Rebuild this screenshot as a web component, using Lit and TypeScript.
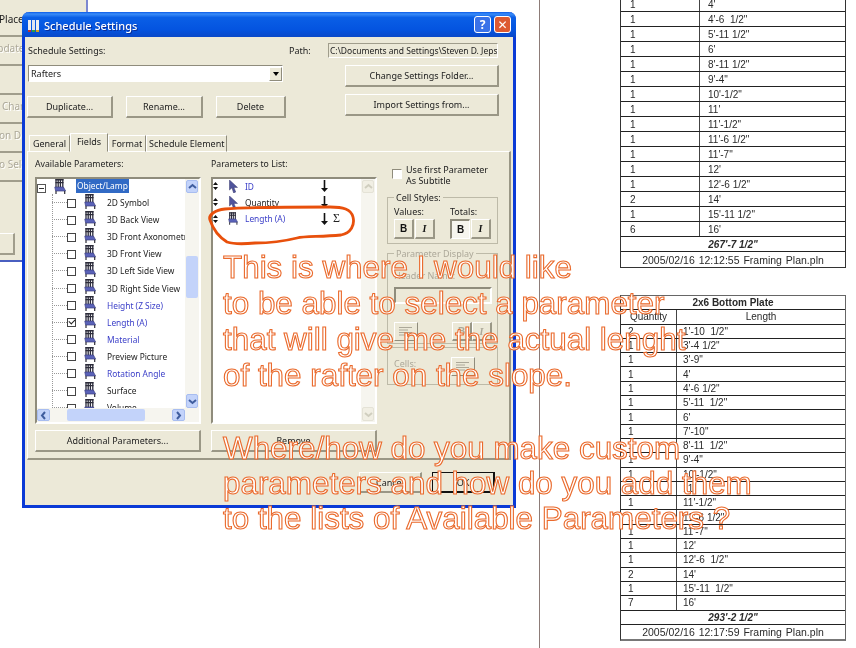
import { LitElement, html, css } from "lit";
import { customElement } from "lit/decorators.js";

const chair = () => html`<svg class="chair" viewBox="0 0 12 15" width="12" height="15">
  <path d="M1.5 0h8v1.4h-8zM1.5 3h8v1.2h-8z" fill="#2e2e38"/>
  <path d="M2 0v9M4.2 0v9M6.4 0v9M8.8 0v9" stroke="#2c2c3c" stroke-width="1.3" fill="none"/>
  <path d="M.8 8h8.6l2.2 4H1.6z" fill="#5a62b8" stroke="#3c3f80" stroke-width=".7"/>
  <path d="M2 12v3M10.7 12v3" stroke="#2e2e38" stroke-width="1.2"/>
</svg>`;
const cursor = () => html`<svg class="cursor" viewBox="0 0 9 13" width="9" height="13">
  <path d="M1 0v10l2.4-2.2L5.2 13l2-1-1.8-4.6H9z" fill="#50549c" stroke="#34366a" stroke-width=".5"/>
</svg>`;
const updown = () => html`<svg class="updown" viewBox="0 0 5 8" width="5" height="8"><path d="M2.5 0L5 3H0zM0 5h5L2.5 8z" fill="#111"/></svg>`;
const down = () => html`<svg class="down" viewBox="0 0 7 12" width="7" height="12"><path d="M2.7 0h1.6v8H7l-3.5 4L0 8h2.7z" fill="#111"/></svg>`;
const chev = (d: string, c = "#3f5d9e") => html`<svg viewBox="0 0 9 9" width="9" height="9"><path d="${d}" fill="none" stroke="${c}" stroke-width="2"/></svg>`;
const alignIcon = () => html`<svg viewBox="0 0 14 9" width="14" height="9"><path d="M0 .5h13M0 3h9M0 5.5h13M0 8h9" stroke="#aca899" stroke-width="1"/></svg>`;

const tree: [string, boolean, boolean][] = [
  ["2D Symbol", false, false],
  ["3D Back View", false, false],
  ["3D Front Axonometric", false, false],
  ["3D Front View", false, false],
  ["3D Left Side View", false, false],
  ["3D Right Side View", false, false],
  ["Height (Z Size)", true, false],
  ["Length (A)", true, true],
  ["Material", true, false],
  ["Preview Picture", false, false],
  ["Rotation Angle", true, false],
  ["Surface", false, false],
  ["Volume", false, false],
];

const rows1 = [
  ["1", "4'"], ["1", "4'-6  1/2\""], ["1", "5'-11 1/2\""], ["1", "6'"], ["1", "8'-11 1/2\""], ["1", "9'-4\""],
  ["1", "10'-1/2\""], ["1", "11'"], ["1", "11'-1/2\""], ["1", "11'-6 1/2\""], ["1", "11'-7\""], ["1", "12'"],
  ["1", "12'-6 1/2\""], ["2", "14'"], ["1", "15'-11 1/2\""], ["6", "16'"],
];
const rows2 = [
  ["2", "1'-10  1/2\""], ["1", "3'-4 1/2\""], ["1", "3'-9\""], ["1", "4'"], ["1", "4'-6 1/2\""], ["1", "5'-11  1/2\""],
  ["1", "6'"], ["1", "7'-10\""], ["1", "8'-11  1/2\""], ["1", "9'-4\""], ["1", "10'-1/2\""], ["1", "11'"],
  ["1", "11'-1/2\""], ["1", "11'-6 1/2\""], ["1", "11'-7\""], ["1", "12'"], ["1", "12'-6  1/2\""], ["2", "14'"],
  ["1", "15'-11  1/2\""], ["7", "16'"],
];

@customElement("app-root")
export class AppRoot extends LitElement {
  static styles = css`
    :host { display: block; position: relative; width: 856px; height: 648px; overflow: hidden; background: #fff;
      font-family: "Noto Sans", "DejaVu Sans", sans-serif; font-size: 9px; color: #222; filter: blur(.35px); }
    * { box-sizing: border-box; }
    svg { display: block; flex: none; }
    .divider { position: absolute; left: 539px; top: 0; width: 1px; height: 648px; background: #8d7c78; }

    /* window behind */
    .back { position: absolute; left: 0; top: 0; width: 88px; height: 262px; background: #ece9d8;
      border-right: 2px solid #7d88d0; border-bottom: 2px solid #4a5fc0; overflow: hidden; padding-top: 8px;
      display: flex; flex-direction: column; font-size: 10px; }
    .bk { width: 78px; height: 29px; border-bottom: 2px solid #a09d8c; flex: none; line-height: 22px; white-space: nowrap; overflow: hidden; color: #222; }
    .bk.dis { color: #aca899; text-shadow: 1px 1px 0 #fff; }
    .bk .m1 { margin-left: -1px; } .bk .m2 { margin-left: -10px; } .bk .m3 { margin-left: 2px; }
    .bk.last { width: 15px; height: 22px; margin-top: 51px; border-top: 1px solid #fff; border-right: 2px solid #a09d8c; }

    /* dialog */
    .dialog { position: absolute; left: 22px; top: 12px; width: 494px; height: 496px; background: #ece9d8;
      border: 3px solid #0a3ad6; border-top: 0; border-radius: 7px 7px 0 0; display: flex; flex-direction: column; }
    .title { height: 25px; margin: 0 -3px; border-radius: 7px 7px 0 0; flex: none; display: flex; align-items: center; padding: 2px 5px 0 5px;
      background: linear-gradient(#0a5ae8 0, #3a8cf8 8%, #0a5fe6 22%, #0454e0 70%, #0a48c8 100%); color: #fff; font-size: 11px; font-weight: 500; }
    .title .name { margin-left: 4px; flex: 1; white-space: nowrap; text-shadow: 1px 1px 0 #0a2f9a; }
    .tb { width: 17px; height: 17px; margin-top: -2px; border: 1px solid #fff; border-radius: 3px; display: flex; align-items: center; justify-content: center; color: #fff; font-size: 12px; font-weight: 700; line-height: 1; }
    .tb.help { background: #3a72e8; margin-right: 3px; }
    .tb.close { background: #dd5a32; }
    .body { flex: 1; display: flex; flex-direction: column; min-height: 0; }

    .top { height: 96px; display: grid; grid-template-columns: 264px 1fr; flex: none; }
    .tl { padding-left: 3px; display: flex; flex-direction: column; align-items: flex-start; }
    .tl .lab { margin-top: 7px; line-height: 13px; }
    .combo { width: 255px; height: 17px; margin-top: 8px; background: #fff; border: 1px solid; border-color: #8f8c7c #fff #fff #8f8c7c;
      display: flex; align-items: center; padding-left: 2px; }
    .combo span { flex: 1; }
    .cbtn { width: 13px; height: 14px; background: #ece9d8; border: 1px solid; border-color: #fff #8f8c7c #8f8c7c #fff; display: flex; align-items: center; justify-content: center; }
    .cbtn i { width: 0; height: 0; border: 3.5px solid transparent; border-top: 4px solid #000; border-bottom: 0; }
    .brow { display: flex; gap: 13px; margin-top: 14px; margin-left: -1px; }
    .btn { height: 22px; background: #ece9d8; border: 1px solid; border-color: #fff #9a9786 #9a9786 #fff; border-width: 1px 2px 2px 1px;
      display: flex; align-items: center; justify-content: center; white-space: nowrap; flex: none; }
    .w86 { width: 86px; } .w77 { width: 77px; } .w70 { width: 70px; } .w154 { width: 154px; } .w166 { width: 166px; } .w63 { width: 63px; }
    .tr { display: flex; flex-direction: column; align-items: flex-start; }
    .pathrow { display: flex; align-items: center; margin-top: 6px; }
    .pathrow .pl { width: 39px; }
    .pathf { width: 170px; height: 15px; border: 1px solid; border-color: #a09d8c #fff #fff #a09d8c; padding-left: 1px; line-height: 13px; overflow: hidden; white-space: nowrap; font-size: 8.5px; }
    .tr .btn { margin-left: 56px; margin-top: 7px; }

    .tabs { height: 19px; display: flex; align-items: flex-end; padding-left: 4px; flex: none; position: relative; z-index: 1; margin-bottom: -1px; }
    .tab { height: 17px; border: 1px solid; border-color: #fff #8f8c7c transparent #fff; padding: 0 2px; line-height: 15px; white-space: nowrap; text-align: center; flex: none; }
    .tab.on { height: 19px; background: #ece9d8; border-bottom-color: #ece9d8; line-height: 15px; }
    .t41 { width: 41px; } .t37 { width: 38px; } .t38 { width: 38px; } .t81 { width: 81px; }
    .panel { margin-left: 2px; width: 484px; height: 309px; flex: none; border: 1px solid; border-color: #fff #9a9786 #9a9786 #fff; border-width: 1px 2px 2px 1px;
      display: grid; grid-template-columns: 166px 166px 111px; column-gap: 10px; padding-left: 7px; }
    .col { display: flex; flex-direction: column; align-items: flex-start; }
    .col .h { margin-top: 6px; line-height: 13px; height: 19px; font-size: 8.7px; }
    .list { width: 166px; height: 247px; background: #fff; border: 2px solid; border-color: #8f8c7c #fff #fff #8f8c7c; position: relative; overflow: hidden; font-size: 8.4px; }
    .col > .btn { margin-top: 6px; }

    .tree { width: 149px; height: 231px; overflow: hidden; position: relative; }
    .tree::before { content: ""; position: absolute; left: 15px; top: 15px; bottom: 0; border-left: 1px dotted #999; }
    .root { height: 15px; display: flex; align-items: flex-start; }
    .minus { width: 9px; height: 9px; border: 1px solid #555; margin-top: 5px; position: relative; flex: none; }
    .minus::after { content: ""; position: absolute; left: 1px; right: 1px; top: 3px; height: 1px; background: #333; }
    .root .chair { margin-left: 8px; }
    .sel { margin-left: 10px; background: #316ac5; color: #fff; padding: 0 1px; line-height: 14px; height: 14px; }
    .item { height: 17.1px; display: flex; align-items: center; white-space: nowrap; position: relative; }
    .item::before { content: ""; width: 15px; margin-left: 15px; border-top: 1px dotted #999; flex: none; }
    .chk { width: 9px; height: 9px; border: 1px solid #444; background: #fff; flex: none; position: relative; margin-top: 1px; }
    .chk.on::after { content: ""; position: absolute; left: 1px; top: 0; width: 5px; height: 3px; border-left: 1.3px solid #222; border-bottom: 1.3px solid #222; transform: rotate(-45deg); }
    .item .chair { margin-left: 8px; margin-top: -3px; }
    .item span { margin-left: 11px; }
    .blue { color: #3a3ec8; }

    .vbar { position: absolute; right: 0; top: 0; bottom: 0; width: 14px; background: #f6f5ef; display: flex; flex-direction: column; padding: 1px 1px 14px 1px; }
    .sb { background: #c3d3fa; border: 1px solid #a8bdf0; border-radius: 2px; display: flex; align-items: center; justify-content: center; flex: none; }
    .vbar .sb.u { height: 13px; }
    .vbar .thumb { height: 42px; margin-top: 63px; background: #c3d3fa; border-radius: 2px; flex: none; }
    .vbar .sb.d { height: 14px; margin-top: auto; }
    .hbar { position: absolute; left: 0; right: 0; bottom: 0; height: 14px; background: #f6f5ef; display: flex; align-items: center; padding-right: 14px; }
    .hbar .sb { width: 13px; height: 12px; }
    .hbar .hthumb { width: 78px; height: 12px; margin-left: 17px; background: #c3d3fa; border-radius: 2px; }
    .hbar .r { margin-left: auto; }
    .vbar.off { padding-bottom: 1px; } .vbar.off .sb { background: #f1efe4; border-color: #e4e2d6; }

    .prow { height: 16.3px; display: flex; align-items: center; white-space: nowrap; }
    .prow:first-child { margin-top: -1px; }
    .prow .cursor, .prow .chair { margin-left: 10px; width: 10px; }
    .prow span.t { width: 76px; margin-left: 7px; flex: none; }
    .prow .sig { margin-left: 5px; font-family: "Liberation Serif", serif; font-size: 12px; }

    .r-col { padding-left: 5px; padding-top: 12px; }
    .usefirst { display: flex; gap: 4px; line-height: 11px; }
    .usefirst .bigchk { width: 10px; height: 10px; margin-top: 5px; border: 1px solid; border-color: #8f8c7c #fff #fff #8f8c7c; background: #fff; flex: none; }
    .grp { width: 111px; margin-left: -5px; border: 1px solid #bdbaa8; position: relative; flex: none; }
    .grp .lg { position: absolute; left: 6px; top: -7px; background: #ece9d8; padding: 0 2px; line-height: 13px; }
    .g1 { height: 47px; margin-top: 11px; padding: 7px 0 0 6px; }
    .cells { display: grid; grid-template-columns: 56px 56px; }
    .cells .cl { line-height: 13px; height: 14px; }
    .bi { display: flex; }
    .sq { width: 20px; height: 20px; margin-right: 1px; background: #ece9d8; border: 1px solid; border-color: #fff #9a9786 #9a9786 #fff; border-width: 1px 2px 2px 1px;
      display: flex; align-items: center; justify-content: center; font-family: "Liberation Sans", sans-serif; font-weight: 700; font-size: 10px; color: #111; }
    .sq.it { font-style: italic; font-family: "Liberation Serif", serif; }
    .sq.pr { background: #f6f5ee; border-color: #8f8c7c #fff #fff #8f8c7c; border-width: 2px 1px 1px 2px; }
    .g2 { height: 91px; margin-top: 9px; padding: 15px 0 0 6px; color: #aca899; }
    .g2 .hn { line-height: 13px; height: 18px; }
    .g2 .fld { width: 98px; height: 17px; border: 2px solid; border-color: #8f8c7c #fff #fff #8f8c7c; }
    .g2 .ctl { display: flex; justify-content: space-between; margin-top: 18px; width: 98px; }
    .dsq { width: 24px; height: 19px; border: 1px solid; border-color: #fff #8f8c7c #8f8c7c #fff; display: flex; align-items: center; justify-content: center; }
    .g2 .bi .sq { color: #aca899; height: 19px; margin-right: 0; }
    .g3 { height: 38px; margin-top: 3px; padding: 9px 22px 0 6px; color: #aca899; display: flex; justify-content: space-between; }

    .foot { flex: 1; display: flex; justify-content: flex-end; align-items: flex-start; gap: 10px; padding: 12px 18px 0 0; }
    .foot .btn { height: 21px; }
    .foot .ok { border: 1px solid #111; border-width: 1px 2px 2px 1px; }

    /* sheets */
    .sheet { position: absolute; left: 620px; width: 226px; background: #fff; border: solid #333; border-width: 0 1px 1px 1px; font-family: "Liberation Sans", Arial, sans-serif; font-size: 10px; color: #2a2a2a; }
    .s1 { top: -3px; } .s2 { top: 295px; border-top: 1px solid #666; border-right-color: #666; border-bottom: 2px solid #777; }
    .rw { display: grid; height: 15px; border-bottom: 1px solid #222; align-items: center; }
    .s1 .rw { grid-template-columns: 79px 1fr; }
    .s2 .rw { height: 14.3px; grid-template-columns: 56px 1fr; }
    .rw > div { line-height: 13px; white-space: pre; height: 100%; display: flex; align-items: center; }
    .rw > .q { border-right: 1px solid #444; }
    .s1 .q { padding-left: 9px; } .s1 .v { padding-left: 8px; }
    .s2 .q { padding-left: 7px; } .s2 .v { padding-left: 6px; }
    .rw.full { display: flex; justify-content: center; }
    .rw.full.ttl { font-weight: 700; }
    .rw.full.tot { font-weight: 700; font-style: italic; }
    .rw.last { border-bottom: 0; font-size: 10.5px; word-spacing: 1px; }
    .s2 .rw .hc { justify-content: center; padding: 0; }

    /* annotations */
    .oval { position: absolute; left: 205px; top: 155px; width: 160px; height: 100px; overflow: visible; }
    .note { position: absolute; left: 223px; font-family: "Liberation Sans", Arial, sans-serif; font-size: 31.4px; line-height: 36px; white-space: nowrap;
      color: #fff; -webkit-text-stroke: 1.1px #ea6a2c; }
    .n1 { top: 250px; } .n2 { top: 431px; line-height: 35px; }
  `;

  private table(cls: string, rows: string[][], total: string, foot: string, head = false) {
    return html`<div class="sheet ${cls}">
      ${head ? html`<div class="rw full ttl">2x6 Bottom Plate</div>
        <div class="rw"><div class="q hc">Quantity</div><div class="v hc">Length</div></div>` : ""}
      ${rows.map(r => html`<div class="rw"><div class="q">${r[0]}</div><div class="v">${r[1]}</div></div>`)}
      <div class="rw full tot">${total}</div>
      <div class="rw full last">${foot}</div>
    </div>`;
  }

  render() {
    return html`
      <div class="divider"></div>
      <div class="back">
        <div class="bk"><span class="m1">Place</span></div>
        <div class="bk dis"><span class="m2">Update</span></div>
        <div class="bk dis"></div>
        <div class="bk dis"><span class="m3">Change</span></div>
        <div class="bk dis"><span class="m1">on Draw</span></div>
        <div class="bk dis"><span class="m1">o Select</span></div>
        <div class="bk last"></div>
      </div>
      ${this.table("s1", rows1, "267'-7 1/2\"", "2005/02/16 12:12:55   Framing Plan.pln")}
      ${this.table("s2", rows2, "293'-2 1/2\"", "2005/02/16 12:17:59   Framing Plan.pln", true)}

      <div class="dialog">
        <div class="title">
          <svg viewBox="0 0 13 13" width="13" height="13"><path d="M1 1h3v10H1z" fill="#eee"/><path d="M5 1h3v10H5z" fill="#dfe4f0"/><path d="M9 1h3v10H9z" fill="#eee"/><path d="M1 11h3v2H1z" fill="#c03030"/><path d="M5 11h3v2H5z" fill="#30a040"/><path d="M9 11h3v2H9z" fill="#d0a020"/></svg>
          <span class="name">Schedule Settings</span>
          <div class="tb help">?</div>
          <div class="tb close">✕</div>
        </div>
        <div class="body">
          <div class="top">
            <div class="tl">
              <div class="lab">Schedule Settings:</div>
              <div class="combo"><span>Rafters</span><div class="cbtn"><i></i></div></div>
              <div class="brow">
                <div class="btn w86">Duplicate...</div>
                <div class="btn w77">Rename...</div>
                <div class="btn w70">Delete</div>
              </div>
            </div>
            <div class="tr">
              <div class="pathrow"><div class="pl">Path:</div><div class="pathf">C:\\Documents and Settings\\Steven D. Jeps</div></div>
              <div class="btn w154">Change Settings Folder...</div>
              <div class="btn w154">Import Settings from...</div>
            </div>
          </div>
          <div class="tabs">
            <div class="tab t41">General</div>
            <div class="tab on t37">Fields</div>
            <div class="tab t38">Format</div>
            <div class="tab t81">Schedule Element</div>
          </div>
          <div class="panel">
            <div class="col">
              <div class="h">Available Parameters:</div>
              <div class="list">
                <div class="tree">
                  <div class="root"><div class="minus"></div>${chair()}<div class="sel">Object/Lamp</div></div>
                  ${tree.map(([n, b, c]) => html`<div class="item"><div class="chk ${c ? "on" : ""}"></div>${chair()}<span class="${b ? "blue" : ""}">${n}</span></div>`)}
                </div>
                <div class="vbar">
                  <div class="sb u">${chev("M1 6l3.5-3 3.5 3")}</div>
                  <div class="thumb"></div>
                  <div class="sb d">${chev("M1 3l3.5 3 3.5-3")}</div>
                </div>
                <div class="hbar">
                  <div class="sb l">${chev("M6 1L3 4.5 6 8")}</div>
                  <div class="hthumb"></div>
                  <div class="sb r">${chev("M3 1l3 3.5L3 8")}</div>
                </div>
              </div>
              <div class="btn w166">Additional Parameters...</div>
            </div>
            <div class="col">
              <div class="h">Parameters to List:</div>
              <div class="list">
                <div class="prow">${updown()}${cursor()}<span class="t blue">ID</span>${down()}</div>
                <div class="prow">${updown()}${cursor()}<span class="t">Quantity</span>${down()}</div>
                <div class="prow">${updown()}${chair()}<span class="t blue">Length (A)</span>${down()}<span class="sig">Σ</span></div>
                <div class="vbar off">
                  <div class="sb u">${chev("M1 6l3.5-3 3.5 3", "#d0cebf")}</div>
                  <div class="sb d">${chev("M1 3l3.5 3 3.5-3", "#d0cebf")}</div>
                </div>
              </div>
              <div class="btn w166">Remove</div>
            </div>
            <div class="col r-col">
              <div class="usefirst"><div class="bigchk"></div><div>Use first Parameter<br />As Subtitle</div></div>
              <div class="grp g1">
                <div class="lg">Cell Styles:</div>
                <div class="cells">
                  <div class="cl">Values:</div><div class="cl">Totals:</div>
                  <div class="bi"><div class="sq">B</div><div class="sq it">I</div></div>
                  <div class="bi"><div class="sq pr">B</div><div class="sq it">I</div></div>
                </div>
              </div>
              <div class="grp g2">
                <div class="lg">Parameter Display</div>
                <div class="hn">Header Name:</div>
                <div class="fld"></div>
                <div class="ctl">
                  <div class="dsq">${alignIcon()}</div>
                  <div class="bi"><div class="sq">B</div><div class="sq it">I</div></div>
                </div>
              </div>
              <div class="grp g3"><span>Cells:</span><div class="dsq">${alignIcon()}</div></div>
            </div>
          </div>
          <div class="foot">
            <div class="btn w63">Cancel</div>
            <div class="btn w63 ok">OK</div>
          </div>
        </div>
      </div>

      <svg class="oval" viewBox="0 0 160 100" fill="none">
        <path d="M5 65C3 60 10 55 20 54C40 52 85 52 125 52C138 52 146 54 148 62C150 70 146 78 136 80C115 82 100 81 92 83C80 86 65 88 50 88C40 89 28 89 22 87C14 82 8 74 5 65Z" stroke="#e8500c" stroke-width="2.8"/>
      </svg>
      <div class="note n1">This is where I would like<br />to be able to select a parameter<br />that will give me the actual lenght<br />of the rafter on the slope.</div>
      <div class="note n2">Where/how do you make custom<br />parameters and how do you add them<br />to the lists of Available Parameters ?</div>
    `;
  }
}
